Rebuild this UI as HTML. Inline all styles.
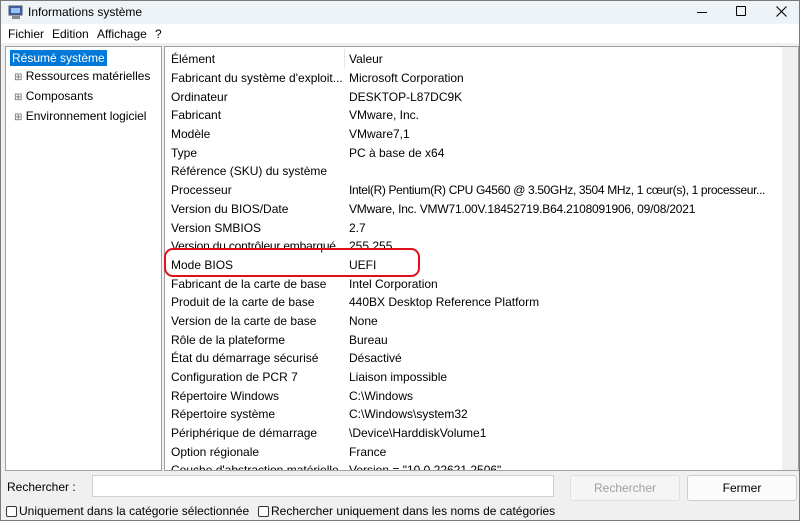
<!DOCTYPE html>
<html><head><meta charset="utf-8"><style>
*{margin:0;padding:0;box-sizing:border-box}
body{width:800px;height:521px;overflow:hidden;font-family:"Liberation Sans",sans-serif;font-size:12px;color:#000;background:#f0f0f0;position:relative}
.win{position:absolute;left:0;top:0;width:800px;height:521px;border:1px solid #7a7a7a;}
.title{position:absolute;left:0;top:0;width:798px;height:23px;background:#eef3f8}
.title span{position:absolute;left:27px;top:4px;font-size:12px}
.menu{position:absolute;left:0;top:23px;width:798px;height:19px;background:#fff}
.menu span{position:absolute;top:3px}
.panel{position:absolute;background:#fff;border:1px solid #a0a0a0}
.row{position:absolute;left:6px;white-space:nowrap}
.val{position:absolute;left:184px;white-space:nowrap}
.btn{position:absolute;border:1px solid #ccc;border-radius:3px;background:#fbfbfb;text-align:center;line-height:24px}
.cb{display:inline-block;width:11px;height:11px;border:1px solid #333;border-radius:2px;vertical-align:-2px;margin-right:2px;background:#fff}
</style></head><body><div class="win">
<div class="title">
<svg style="position:absolute;left:7px;top:4px" width="16" height="15"><rect x="1" y="1" width="13" height="9" fill="#3b5fb0" stroke="#555"/><rect x="3" y="3" width="9" height="5" fill="#9cc0ef"/><rect x="4" y="11" width="8" height="3" fill="#888"/></svg>
<span>Informations système</span>
<div style="position:absolute;left:696px;top:11px;width:10px;height:1px;background:#000"></div>
<div style="position:absolute;left:735px;top:5px;width:10px;height:10px;border:1px solid #000;border-radius:1px"></div>
<svg style="position:absolute;left:775px;top:5px" width="11" height="11"><path d="M0.5 0.5L10.5 10.5M10.5 0.5L0.5 10.5" stroke="#000" stroke-width="1.1"/></svg>
</div>
<div class="menu"><span style="left:7px">Fichier</span><span style="left:51px">Edition</span><span style="left:96px">Affichage</span><span style="left:154px">?</span></div>
<div class="panel" style="left:4px;top:45px;width:157px;height:425px">
<div style="position:absolute;left:4px;top:3px;background:#0078d7;color:#fff;padding:1px 2px">Résumé système</div>
<div style="position:absolute;left:8px;top:20px;color:#000;font-size:12px;line-height:18px">
<div><span style="font-size:10px;color:#666">⊞</span> Ressources matérielles</div>
<div><span style="font-size:10px;color:#666">⊞</span> Composants</div>
<div><span style="font-size:10px;color:#666">⊞</span> Environnement logiciel</div></div>
</div>
<div class="panel" style="left:163px;top:45px;width:635px;height:425px;overflow:hidden">
<div style="position:absolute;left:179px;top:2px;width:1px;height:20px;background:#e5e5e5"></div>
<div style="position:absolute;right:0;top:0;width:16px;height:425px;background:#f0f0f0"></div>
<div class="row" style="top:5px">Élément</div><div class="val" style="top:5px">Valeur</div>
<div style="position:absolute;left:0;top:-2px;width:610px">
<div class="row" style="top:26px">Fabricant du système d'exploit...</div><div class="val" style="top:26px">Microsoft Corporation</div>
<div class="row" style="top:45px">Ordinateur</div><div class="val" style="top:45px">DESKTOP-L87DC9K</div>
<div class="row" style="top:63px">Fabricant</div><div class="val" style="top:63px">VMware, Inc.</div>
<div class="row" style="top:82px">Modèle</div><div class="val" style="top:82px">VMware7,1</div>
<div class="row" style="top:101px">Type</div><div class="val" style="top:101px">PC à base de x64</div>
<div class="row" style="top:119px">Référence (SKU) du système</div>
<div class="row" style="top:138px">Processeur</div><div class="val" style="top:138px;letter-spacing:-0.35px">Intel(R) Pentium(R) CPU G4560 @ 3.50GHz, 3504 MHz, 1 cœur(s), 1 processeur...</div>
<div class="row" style="top:157px">Version du BIOS/Date</div><div class="val" style="top:157px;letter-spacing:-0.2px">VMware, Inc. VMW71.00V.18452719.B64.2108091906, 09/08/2021</div>
<div class="row" style="top:176px">Version SMBIOS</div><div class="val" style="top:176px">2.7</div>
<div class="row" style="top:194px;letter-spacing:-0.2px">Version du contrôleur embarqué</div><div class="val" style="top:194px">255.255</div>
<div class="row" style="top:213px">Mode BIOS</div><div class="val" style="top:213px">UEFI</div>
<div class="row" style="top:232px">Fabricant de la carte de base</div><div class="val" style="top:232px">Intel Corporation</div>
<div class="row" style="top:250px">Produit de la carte de base</div><div class="val" style="top:250px">440BX Desktop Reference Platform</div>
<div class="row" style="top:269px">Version de la carte de base</div><div class="val" style="top:269px">None</div>
<div class="row" style="top:288px">Rôle de la plateforme</div><div class="val" style="top:288px">Bureau</div>
<div class="row" style="top:306px">État du démarrage sécurisé</div><div class="val" style="top:306px">Désactivé</div>
<div class="row" style="top:325px">Configuration de PCR 7</div><div class="val" style="top:325px">Liaison impossible</div>
<div class="row" style="top:344px">Répertoire Windows</div><div class="val" style="top:344px">C:\Windows</div>
<div class="row" style="top:362px">Répertoire système</div><div class="val" style="top:362px">C:\Windows\system32</div>
<div class="row" style="top:381px">Périphérique de démarrage</div><div class="val" style="top:381px">\Device\HarddiskVolume1</div>
<div class="row" style="top:400px">Option régionale</div><div class="val" style="top:400px">France</div>
<div class="row" style="top:418px">Couche d'abstraction matérielle</div><div class="val" style="top:418px">Version = "10.0.22621.2506"</div>
</div></div>
<div style="position:absolute;left:163px;top:247px;width:256px;height:29px;border:2.5px solid #e0101a;border-radius:9px"></div>
<div style="position:absolute;left:6px;top:479px">Rechercher :</div>
<div style="position:absolute;left:91px;top:474px;width:462px;height:22px;background:#fff;border:1px solid #d0d0d0"></div>
<div class="btn" style="left:569px;top:474px;width:110px;height:26px;color:#a0a0a0;border-color:#e0e0e0;background:#f5f5f5">Rechercher</div>
<div class="btn" style="left:686px;top:474px;width:110px;height:26px">Fermer</div>
<div style="position:absolute;left:5px;top:503px"><span class="cb"></span>Uniquement dans la catégorie sélectionnée</div>
<div style="position:absolute;left:257px;top:503px"><span class="cb"></span>Rechercher uniquement dans les noms de catégories</div>
</div></body></html>
